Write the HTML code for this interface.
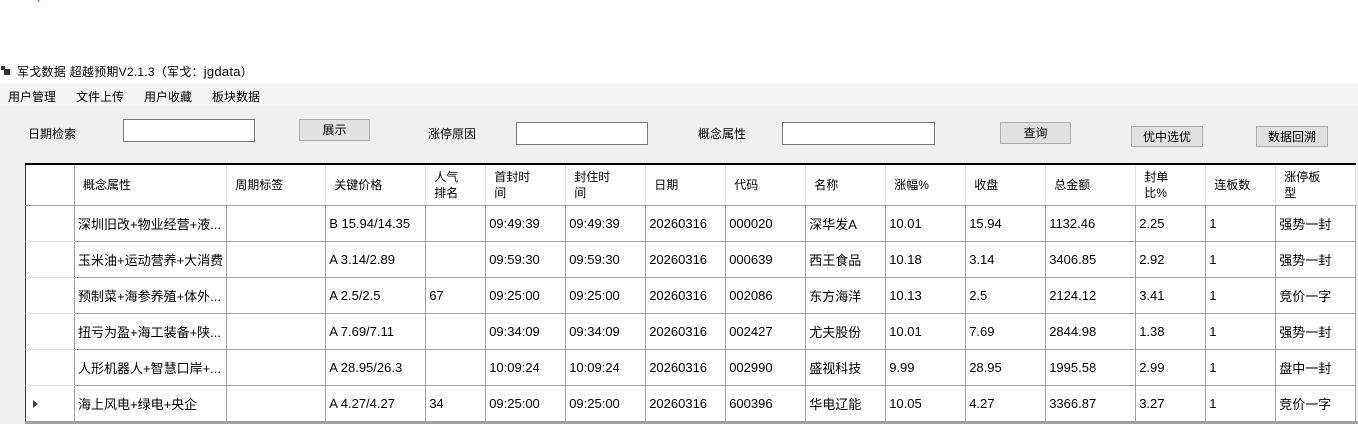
<!DOCTYPE html>
<html><head><meta charset="utf-8"><style>
*{margin:0;padding:0;box-sizing:border-box}
body{width:1358px;height:424px;background:#fff;position:relative;overflow:hidden;font-family:"Liberation Sans","Microsoft YaHei","Noto Sans CJK SC",sans-serif;font-size:12px;color:#000}
.a{position:absolute;white-space:nowrap}
.gray{position:absolute;left:0;top:83px;width:1358px;height:341px;background:#f0f0f0}
.inp{position:absolute;background:#fff;border:1px solid #7a7a7a}
.btn{position:absolute;background:#e1e1e1;border:1px solid #adadad;text-align:center;font-size:12px}
table{position:absolute;left:25px;top:163px;border-collapse:collapse;table-layout:fixed;background:#fff;border-top:2px solid #000;border-left:1px solid #333}
td{border-right:1px solid #a0a0a0;border-bottom:1px solid #a0a0a0;height:36px;padding:0 3px;white-space:nowrap;overflow:hidden;font-size:13px}
th{font-weight:normal;text-align:left;height:41px;border-right:1px solid #e3e3e3;border-bottom:1px solid #a0a0a0;padding:0 6px 0 8px;font-size:12px;line-height:16px;vertical-align:middle}
td:first-child,th:first-child{border-right:1px solid #a0a0a0}
td:first-child{border-bottom-color:#e3e3e3}
</style></head><body>
<div class="a" style="left:38px;top:0;width:1px;height:2px;background:#e33"></div>
<div class="a" style="left:1px;top:66px;width:4px;height:4px;background:#333"></div>
<div class="a" style="left:4px;top:69px;width:6px;height:6px;background:#333"></div>
<div class="a" style="left:17px;top:63px;font-size:12px;letter-spacing:0.25px">军戈数据 超越预期V2.1.3（军戈：<span style="font-size:13px">jgdata</span>）</div>
<div class="gray"></div>
<div class="a" style="left:0;top:83px;width:1358px;height:23px;background:#f5f5f5"></div>
<div class="a" style="left:8px;top:88px">用户管理</div>
<div class="a" style="left:76px;top:88px">文件上传</div>
<div class="a" style="left:144px;top:88px">用户收藏</div>
<div class="a" style="left:212px;top:88px">板块数据</div>

<div class="a" style="left:28px;top:125px">日期检索</div>
<div class="inp" style="left:123px;top:119px;width:132px;height:23px"></div>
<div class="btn" style="left:299px;top:119px;width:71px;height:22px;line-height:20px">展示</div>
<div class="a" style="left:428px;top:125px">涨停原因</div>
<div class="inp" style="left:516px;top:122px;width:132px;height:23px"></div>
<div class="a" style="left:698px;top:125px">概念属性</div>
<div class="inp" style="left:782px;top:122px;width:153px;height:23px"></div>
<div class="btn" style="left:1000px;top:122px;width:71px;height:22px;line-height:20px">查询</div>
<div class="btn" style="left:1131px;top:126px;width:72px;height:21px;line-height:20px">优中选优</div>
<div class="btn" style="left:1256px;top:126px;width:72px;height:21px;line-height:20px">数据回溯</div>

<table>
<colgroup><col style="width:49px"><col style="width:151px"><col style="width:99px"><col style="width:100px"><col style="width:60px"><col style="width:80px"><col style="width:80px"><col style="width:80px"><col style="width:80px"><col style="width:80px"><col style="width:80px"><col style="width:80px"><col style="width:90px"><col style="width:70px"><col style="width:70px"><col style="width:80px"></colgroup>
<tr><th></th><th>概念属性</th><th>周期标签</th><th>关键价格</th><th>人气<br>排名</th><th>首封时<br>间</th><th>封住时<br>间</th><th>日期</th><th>代码</th><th>名称</th><th>涨幅%</th><th>收盘</th><th>总金额</th><th>封单<br>比%</th><th>连板数</th><th>涨停板<br>型</th></tr>
<tr><td></td><td>深圳旧改+物业经营+液...</td><td></td><td>B 15.94/14.35</td><td></td><td>09:49:39</td><td>09:49:39</td><td>20260316</td><td>000020</td><td>深华发A</td><td>10.01</td><td>15.94</td><td>1132.46</td><td>2.25</td><td>1</td><td>强势一封</td></tr>
<tr><td></td><td>玉米油+运动营养+大消费</td><td></td><td>A 3.14/2.89</td><td></td><td>09:59:30</td><td>09:59:30</td><td>20260316</td><td>000639</td><td>西王食品</td><td>10.18</td><td>3.14</td><td>3406.85</td><td>2.92</td><td>1</td><td>强势一封</td></tr>
<tr><td></td><td>预制菜+海参养殖+体外...</td><td></td><td>A 2.5/2.5</td><td>67</td><td>09:25:00</td><td>09:25:00</td><td>20260316</td><td>002086</td><td>东方海洋</td><td>10.13</td><td>2.5</td><td>2124.12</td><td>3.41</td><td>1</td><td>竞价一字</td></tr>
<tr><td></td><td>扭亏为盈+海工装备+陕...</td><td></td><td>A 7.69/7.11</td><td></td><td>09:34:09</td><td>09:34:09</td><td>20260316</td><td>002427</td><td>尤夫股份</td><td>10.01</td><td>7.69</td><td>2844.98</td><td>1.38</td><td>1</td><td>强势一封</td></tr>
<tr><td></td><td>人形机器人+智慧口岸+...</td><td></td><td>A 28.95/26.3</td><td></td><td>10:09:24</td><td>10:09:24</td><td>20260316</td><td>002990</td><td>盛视科技</td><td>9.99</td><td>28.95</td><td>1995.58</td><td>2.99</td><td>1</td><td>盘中一封</td></tr>
<tr><td style="padding-left:7px"><span style="display:inline-block;width:0;height:0;border-top:4px solid transparent;border-bottom:4px solid transparent;border-left:5px solid #444"></span></td><td>海上风电+绿电+央企</td><td></td><td>A 4.27/4.27</td><td>34</td><td>09:25:00</td><td>09:25:00</td><td>20260316</td><td>600396</td><td>华电辽能</td><td>10.05</td><td>4.27</td><td>3366.87</td><td>3.27</td><td>1</td><td>竞价一字</td></tr>
</table>
<div class="a" style="left:25px;top:421px;width:1333px;height:3px;background:#a0a0a0"></div>
</body></html>
